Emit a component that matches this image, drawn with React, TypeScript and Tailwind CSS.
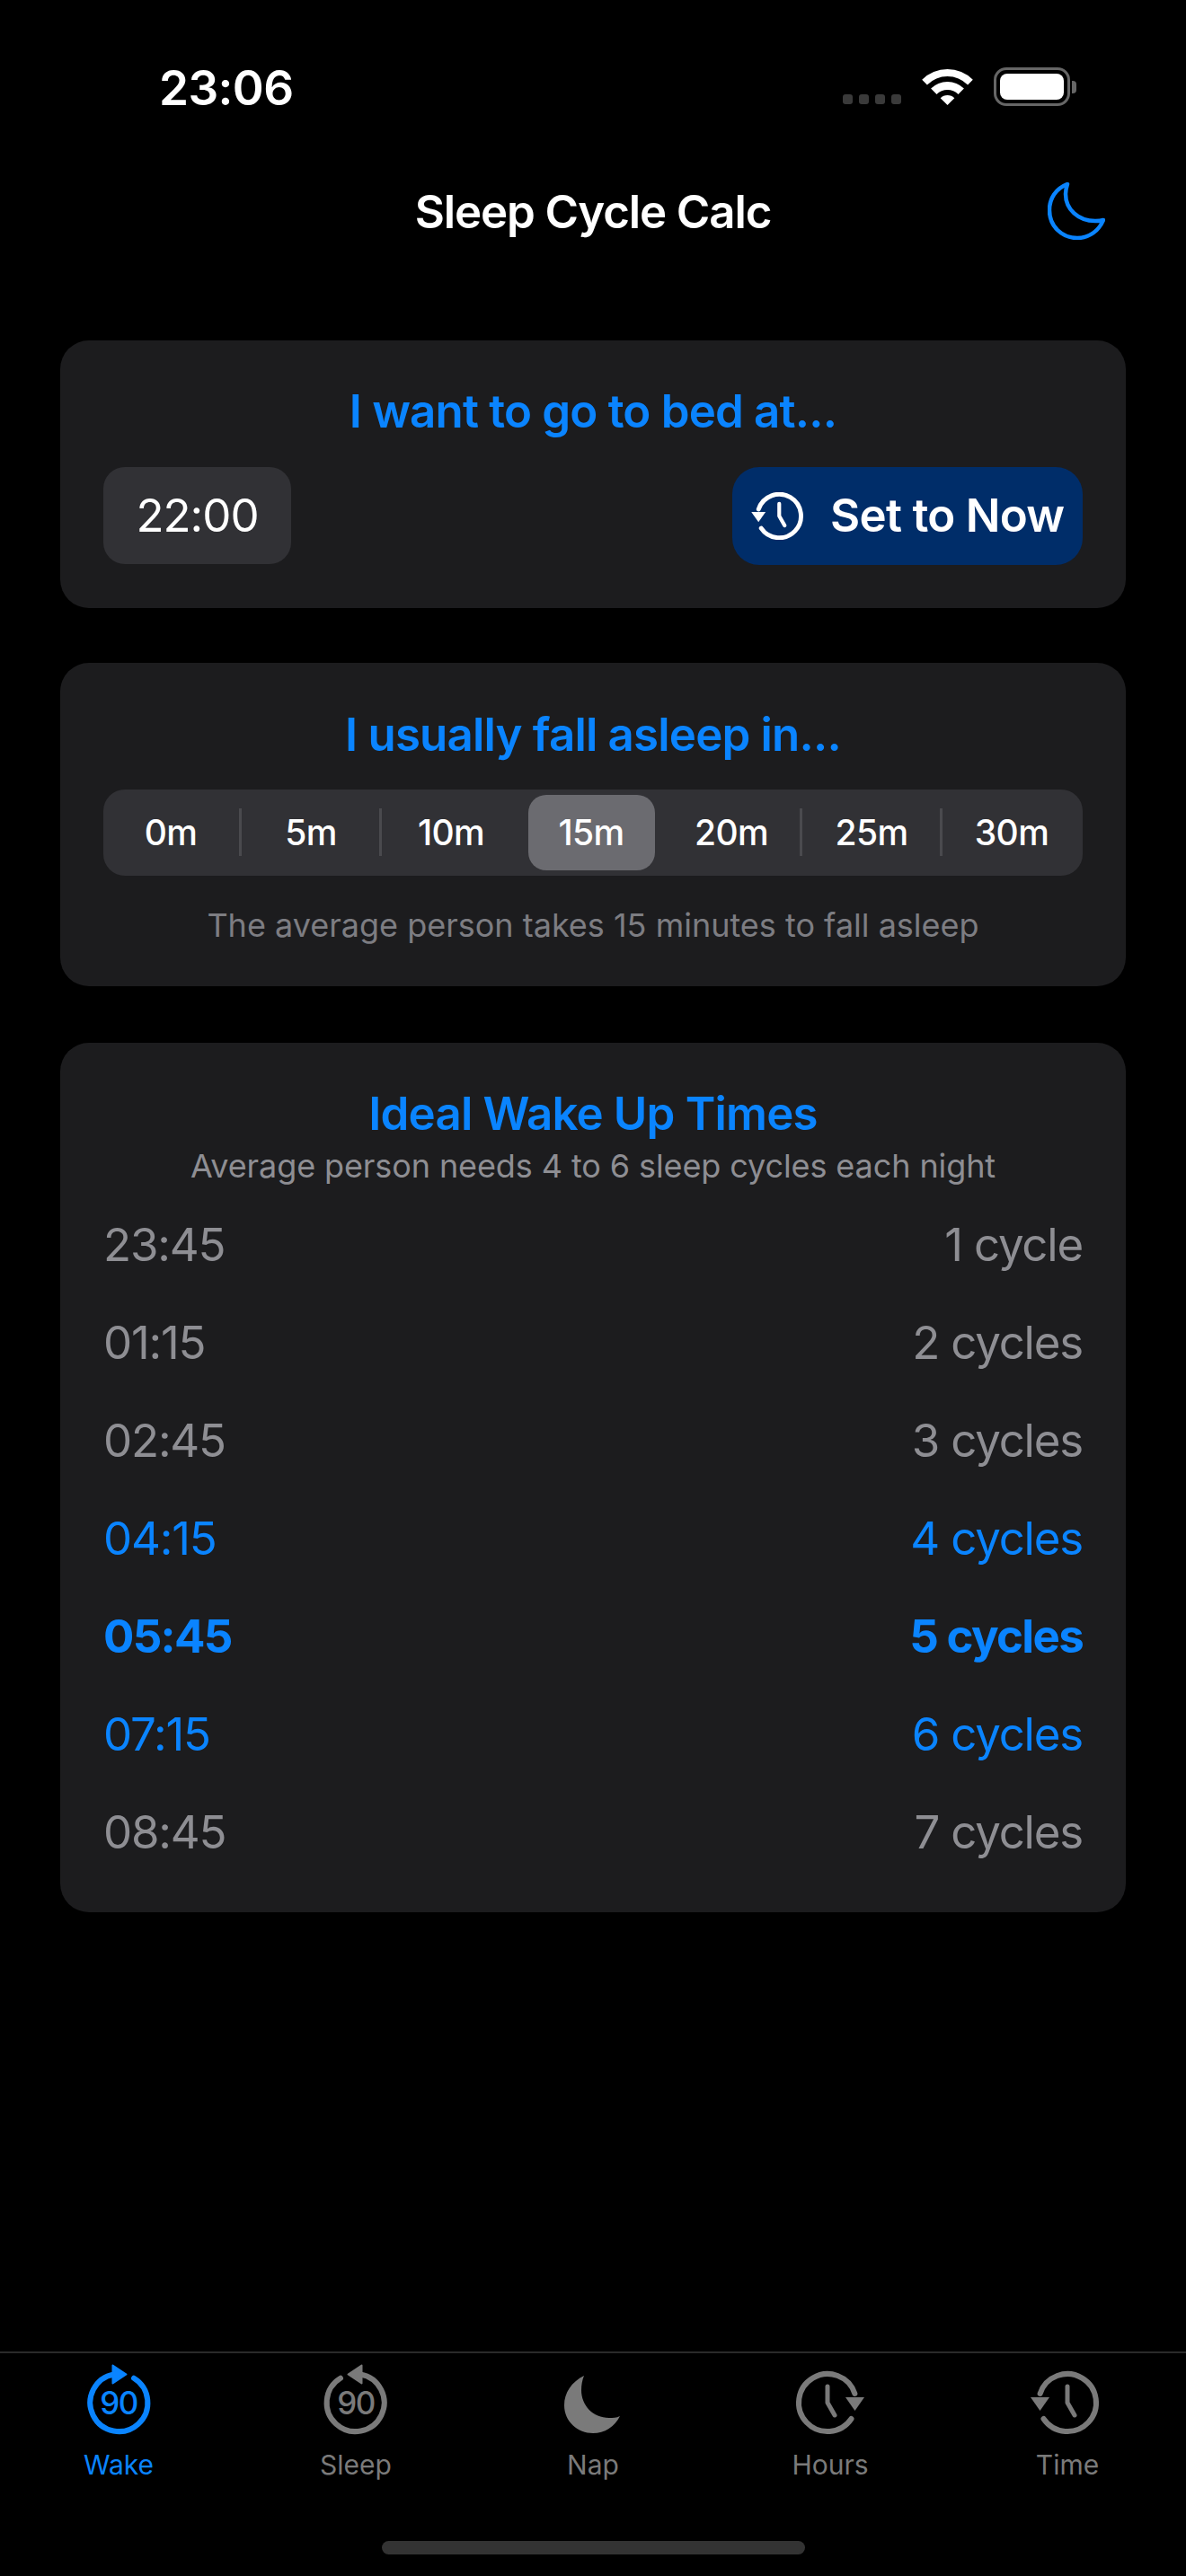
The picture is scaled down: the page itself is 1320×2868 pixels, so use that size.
import React from 'react';

const wakeTimes = [
  { time: '23:45', label: '1 cycle', tone: 'text-[#8e8e93] tracking-[-1.2px]' },
  { time: '01:15', label: '2 cycles', tone: 'text-[#8e8e93] tracking-[-1.2px]' },
  { time: '02:45', label: '3 cycles', tone: 'text-[#8e8e93] tracking-[-1.2px]' },
  { time: '04:15', label: '4 cycles', tone: 'text-[#0a84ff] tracking-[-1.2px]' },
  { time: '05:45', label: '5 cycles', tone: 'text-[#0a84ff] font-bold tracking-[-1.7px]' },
  { time: '07:15', label: '6 cycles', tone: 'text-[#0a84ff] tracking-[-1.2px]' },
  { time: '08:45', label: '7 cycles', tone: 'text-[#8e8e93] tracking-[-1.2px]' },
];

const delays = ['0m', '5m', '10m', '15m', '20m', '25m', '30m'];

// ring with a 90 inside, flipped for the Sleep tab
const NinetyIcon = ({ flip, color }: { flip?: boolean; color: string }) => (
  <svg width="90" height="84" viewBox="0 0 90 84" fill="none">
    <g transform={flip ? 'translate(90,0) scale(-1,1)' : undefined}>
      <path d="M62 17.7A32 32 0 1 1 40 13.5" stroke={color} strokeWidth="6" strokeLinecap="round" />
      <path d="M38.5 3.5L53.5 13.5L38.5 23.5Z" fill={color} stroke={color} strokeWidth="2" strokeLinejoin="round" />
    </g>
    <text x="45" y="58" textAnchor="middle" fontSize="35" fontWeight="500" fill={color} className="tracking-[-1.5px]">
      90
    </text>
  </svg>
);

const ClockForward = ({ color }: { color: string }) => (
  <svg width="90" height="84" viewBox="0 0 90 84" fill="none">
    <path d="M72.4 35A32 32 0 1 0 68.5 63" stroke={color} strokeWidth="6" strokeLinecap="round" />
    <path d="M62 39H83L72.5 54Z" fill={color} />
    <path d="M42 27V45L50 59" stroke={color} strokeWidth="5" strokeLinecap="round" strokeLinejoin="round" />
  </svg>
);

const ClockBack = ({ color, width = 90, height = 84, box = '0 0 90 84', sw = 6 }: { color: string; width?: number; height?: number; box?: string; sw?: number }) => (
  <svg width={width} height={height} viewBox={box} fill="none">
    <g transform="translate(87,0) scale(-1,1)">
      <path d="M72.4 35A32 32 0 1 0 68.5 63" stroke={color} strokeWidth={sw} strokeLinecap="round" />
      <path d="M62 39H83L72.5 54Z" fill={color} />
    </g>
    <path d="M45 27V45L53 59" stroke={color} strokeWidth={sw - 1} strokeLinecap="round" strokeLinejoin="round" />
  </svg>
);

const NapIcon = ({ color }: { color: string }) => (
  <svg width="90" height="84" viewBox="0 0 90 84" fill="none">
    <path d="M35 15C21 22 13 34 13 48C13 66 28 79 45 79C58 79 69 72 75 60C71 62 67 62 63 62C45 62 32 48 32 31C32 25 33 20 35 15Z" fill={color} />
  </svg>
);

const tabs = [
  { label: 'Wake', icon: <NinetyIcon color="#0a84ff" />, tone: 'text-[#0a84ff]' },
  { label: 'Sleep', icon: <NinetyIcon flip color="#7a7a7a" />, tone: 'text-[#7a7a7a]' },
  { label: 'Nap', icon: <NapIcon color="#7a7a7a" />, tone: 'text-[#7a7a7a]' },
  { label: 'Hours', icon: <ClockForward color="#7a7a7a" />, tone: 'text-[#7a7a7a]' },
  { label: 'Time', icon: <ClockBack color="#7a7a7a" />, tone: 'text-[#7a7a7a]' },
];

export default function App() {
  return (
    <div className="w-[1320px] h-[2868px] flex flex-col bg-black text-white font-['Inter',sans-serif] overflow-hidden">
      {/* Status bar */}
      <div className="flex items-center justify-between h-[56px] mt-[70px] pl-[177px] pr-[122px]">
        <span className="text-[53px] font-semibold leading-none tracking-[-0.6px]">23:06</span>
        <div className="flex items-end">
          <div className="flex gap-[7px] mr-[23px] mb-[5px]">
            <div className="w-[11px] h-[11px] rounded-[3px] bg-[#3a3a3a]" />
            <div className="w-[11px] h-[11px] rounded-[3px] bg-[#3a3a3a]" />
            <div className="w-[11px] h-[11px] rounded-[3px] bg-[#3a3a3a]" />
            <div className="w-[11px] h-[11px] rounded-[3px] bg-[#3a3a3a]" />
          </div>
          <svg width="57" height="42" viewBox="0 0 57 42" fill="white" className="mr-[23px] mb-[4px]">
            <path d="M0.2 13.7A40 40 0 0 1 56.8 13.7L51.1 19.4A32 32 0 0 0 5.9 19.4Z" />
            <path d="M10.1 23.6A26 26 0 0 1 46.9 23.6L40.5 30A17 17 0 0 0 16.5 30Z" />
            <path d="M20.7 34.2A11 11 0 0 1 36.3 34.2L28.5 42Z" />
          </svg>
          <div className="flex items-center mb-[3px]">
            <div className="w-[85px] h-[43px] rounded-[14px] border-[3px] border-[#666666] p-[4px]">
              <div className="w-full h-full rounded-[8px] bg-white" />
            </div>
            <div className="w-[5px] h-[14px] ml-[2px] rounded-r-[4px] bg-[#666666]" />
          </div>
        </div>
      </div>

      {/* Nav bar */}
      <div className="grid grid-cols-[1fr_auto_1fr] items-center h-[100px] mt-[59px]">
        <div />
        <h1 className="text-[51px] font-semibold leading-none tracking-[-1.1px]">Sleep Cycle Calc</h1>
        <div className="justify-self-end pr-[90px]">
          <svg width="64" height="64" viewBox="0 0 64 64" fill="none">
            <path
              d="M22 2C9 7 2 18 2 31C2 49 16 62 33 62C46 62 57 54 62 42C59 43 56 43 53 43C34 43 20 30 20 13C20 9 21 5 22 2Z"
              stroke="#0a84ff"
              strokeWidth="4.5"
              strokeLinejoin="round"
            />
          </svg>
        </div>
      </div>

      {/* Bed time */}
      <section className="mx-[67px] mt-[94px] px-[48px] pt-[49px] pb-[49px] rounded-[32px] bg-[#1c1c1e]">
        <h2 className="h-[60px] flex items-center justify-center text-[51px] font-[560] tracking-[-0.8px] text-[#0a84ff]">
          I want to go to bed at...
        </h2>
        <div className="flex items-center justify-between mt-[32px] h-[108px]">
          <div className="w-[209px] h-[108px] flex items-center justify-center rounded-[24px] bg-[#313135] text-[51px] tracking-[-1px]">
            22:00
          </div>
          <button className="w-[390px] h-[109px] flex items-center pl-[21px] rounded-[30px] bg-[#002d69] text-[51px] font-[560] tracking-[-0.7px]">
            <ClockBack color="white" width={58} height={53} box="4 10 76 70" sw={6.5} />
            <span className="ml-[30px]">Set to Now</span>
          </button>
        </div>
      </section>

      {/* Fall asleep delay */}
      <section className="mx-[67px] mt-[61px] px-[48px] pt-[50px] pb-[43px] rounded-[32px] bg-[#1c1c1e]">
        <h2 className="h-[60px] flex items-center justify-center text-[51px] font-[560] tracking-[-0.8px] text-[#0a84ff]">
          I usually fall asleep in...
        </h2>
        <div className="flex items-center h-[96px] mt-[31px] rounded-[24px] bg-[#313135]">
          <div className="flex w-[1092px] -ml-[3px]">
            {delays.map((d, i) => (
              <div key={d} className="relative w-[156px] h-[84px] flex items-center justify-center">
                {d === '15m' ? (
                  <div className="w-[141px] h-[84px] flex items-center justify-center rounded-[20px] bg-[#6b6b70] text-[39px] font-medium tracking-[-0.6px]">
                    {d}
                  </div>
                ) : (
                  <span className="text-[39px] font-medium tracking-[-0.6px]">{d}</span>
                )}
                {i < 6 && i !== 2 && i !== 3 && (
                  <div className="absolute -right-[1px] top-[15px] w-[3px] h-[53px] bg-[#4a4a4e]" />
                )}
              </div>
            ))}
          </div>
        </div>
        <p className="h-[50px] flex items-center justify-center mt-[30px] text-[36px] text-[#7d7d82]">
          The average person takes 15 minutes to fall asleep
        </p>
      </section>

      {/* Wake up times */}
      <section className="mx-[67px] mt-[63px] px-[48px] pt-[49px] pb-[34px] rounded-[32px] bg-[#1c1c1e]">
        <h2 className="h-[60px] flex items-center justify-center text-[51px] font-[560] tracking-[-0.8px] text-[#0a84ff]">
          Ideal Wake Up Times
        </h2>
        <p className="h-[44px] flex items-center justify-center mt-[6px] text-[36px] tracking-[-0.1px] text-[#8e8e93]">
          Average person needs 4 to 6 sleep cycles each night
        </p>
        <div className="mt-[12px]">
          {wakeTimes.map((row) => (
            <div key={row.time} className={`flex items-center justify-between h-[109px] text-[51px] ${row.tone}`}>
              <span>{row.time}</span>
              <span>{row.label}</span>
            </div>
          ))}
        </div>
      </section>

      {/* Tab bar */}
      <div className="mt-auto border-t-2 border-[#2a2a2a]">
        <div className="flex pt-[10px]">
          {tabs.map((tab) => (
            <div key={tab.label} className="flex-1 flex flex-col items-center">
              {tab.icon}
              <span className={`h-[40px] flex items-center mt-[10px] text-[30px] ${tab.tone}`}>{tab.label}</span>
            </div>
          ))}
        </div>
        <div className="w-[471px] h-[15px] mx-auto mt-[65px] mb-[24px] rounded-full bg-[#333333]" />
      </div>
    </div>
  );
}
